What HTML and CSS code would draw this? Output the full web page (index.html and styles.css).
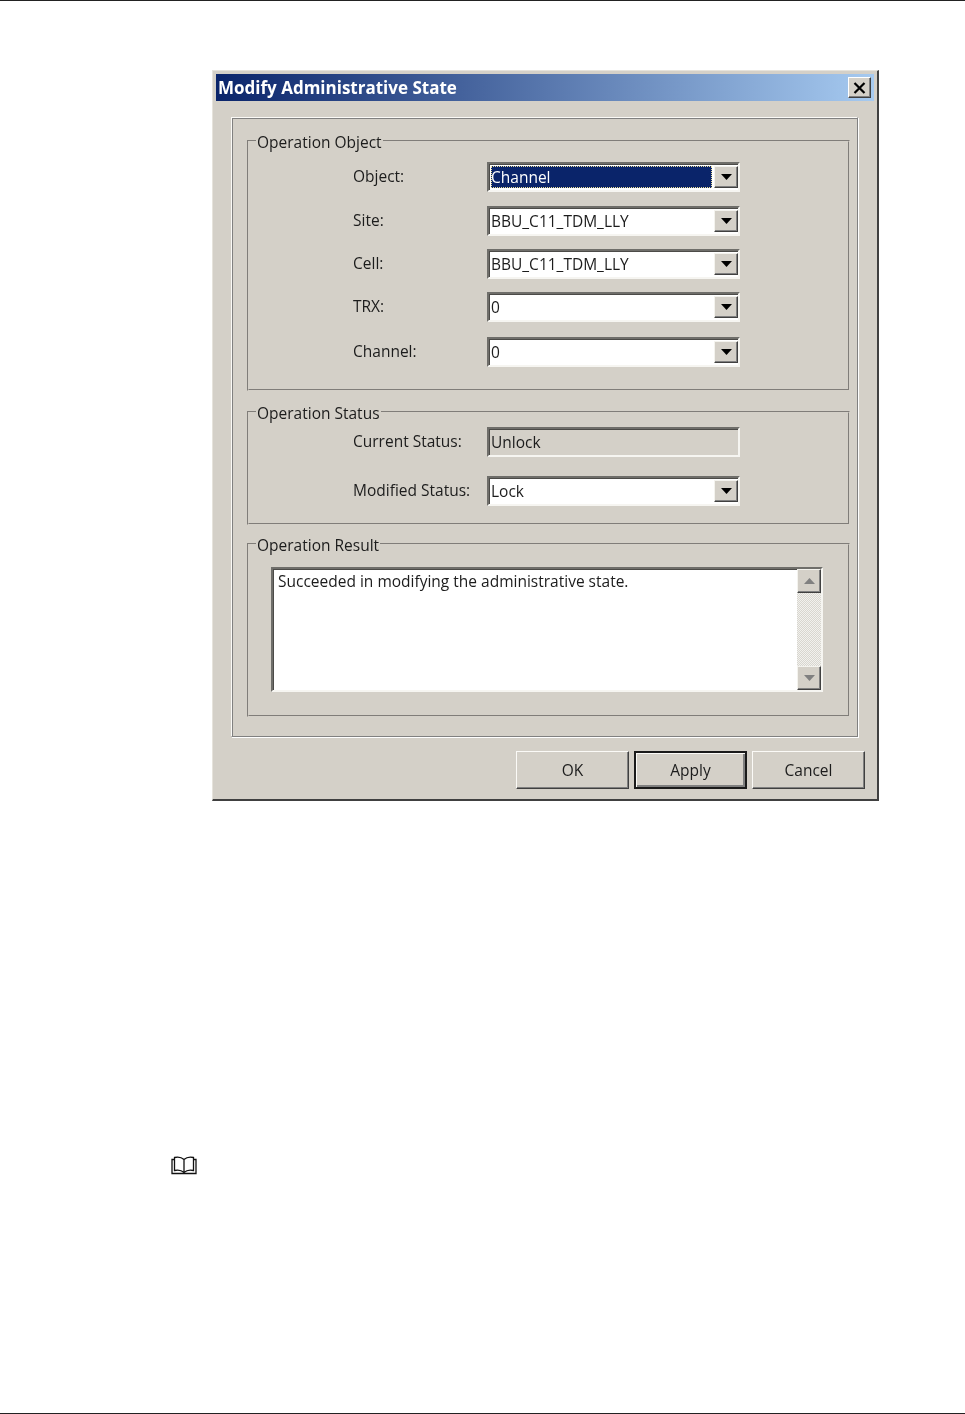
FILE: index.html
```html
<!DOCTYPE html>
<html lang="en">
<head>
  <meta charset="UTF-8" />
  <title>Modify Administrative State</title>
  <link rel="stylesheet" href="styles.css">
</head>
<body>
  <div class="dialog">
    <div class="title-bar">
      <span class="title-text">Modify Administrative State</span>
      <button class="close-button" aria-label="Close">
        <svg width="13" height="12" viewBox="0 0 13 12"><path d="M1.5 1 L11.5 11 M11.5 1 L1.5 11" stroke="#000" stroke-width="2.2" fill="none"/></svg>
      </button>
    </div>
    <div class="panel">
      <fieldset class="group group-object">
        <legend>Operation Object</legend>
        <div class="form-grid rows-object">
          <label>Object:</label>
          <div class="combo">
            <div class="combo-value selected"><span>Channel</span></div>
            <div class="combo-arrow"><svg width="11" height="6" viewBox="0 0 11 6"><path d="M0 0 H11 L5.5 6 Z" fill="#000"/></svg></div>
          </div>
          <label>Site:</label>
          <div class="combo">
            <div class="combo-value">BBU_C11_TDM_LLY</div>
            <div class="combo-arrow"><svg width="11" height="6" viewBox="0 0 11 6"><path d="M0 0 H11 L5.5 6 Z" fill="#000"/></svg></div>
          </div>
          <label>Cell:</label>
          <div class="combo">
            <div class="combo-value">BBU_C11_TDM_LLY</div>
            <div class="combo-arrow"><svg width="11" height="6" viewBox="0 0 11 6"><path d="M0 0 H11 L5.5 6 Z" fill="#000"/></svg></div>
          </div>
          <label>TRX:</label>
          <div class="combo">
            <div class="combo-value">0</div>
            <div class="combo-arrow"><svg width="11" height="6" viewBox="0 0 11 6"><path d="M0 0 H11 L5.5 6 Z" fill="#000"/></svg></div>
          </div>
          <label>Channel:</label>
          <div class="combo">
            <div class="combo-value">0</div>
            <div class="combo-arrow"><svg width="11" height="6" viewBox="0 0 11 6"><path d="M0 0 H11 L5.5 6 Z" fill="#000"/></svg></div>
          </div>
        </div>
      </fieldset>
      <fieldset class="group group-status">
        <legend>Operation Status</legend>
        <div class="form-grid rows-status">
          <label>Current Status:</label>
          <div class="combo readonly"><div class="combo-value">Unlock</div></div>
          <label>Modified Status:</label>
          <div class="combo">
            <div class="combo-value">Lock</div>
            <div class="combo-arrow"><svg width="11" height="6" viewBox="0 0 11 6"><path d="M0 0 H11 L5.5 6 Z" fill="#000"/></svg></div>
          </div>
        </div>
      </fieldset>
      <fieldset class="group group-result">
        <legend>Operation Result</legend>
        <div class="result-box">
          <div class="result-text">Succeeded in modifying the administrative state.</div>
          <div class="scrollbar">
            <div class="scroll-button"><svg width="11" height="6" viewBox="0 0 11 6"><path d="M5.5 0 L11 6 H0 Z" fill="#808080"/></svg></div>
            <div class="scroll-track"></div>
            <div class="scroll-button"><svg width="11" height="6" viewBox="0 0 11 6"><path d="M0 0 H11 L5.5 6 Z" fill="#808080"/></svg></div>
          </div>
        </div>
      </fieldset>
    </div>
    <div class="button-row">
      <button class="dlg-button">OK</button>
      <button class="dlg-button default">Apply</button>
      <button class="dlg-button">Cancel</button>
    </div>
  </div>

  <div class="note-icon">
    <svg width="26" height="19" viewBox="0 0 26 19">
      <path d="M13 3.5 C10.5 1.2 6.5 0.8 3.5 1.5 L3.5 14.5 C6.5 13.8 10.5 14.2 13 16.5 C15.5 14.2 19.5 13.8 22.5 14.5 L22.5 1.5 C19.5 0.8 15.5 1.2 13 3.5 Z M13 3.5 V16.5" fill="none" stroke="#111" stroke-width="1.3"/>
      <path d="M3.5 3.5 H1 V17.5 H25 V3.5 H22.5" fill="none" stroke="#111" stroke-width="1.3"/>
    </svg>
  </div>

  <div class="page-foot"></div>
</body>
</html>
```
FILE: styles.css
```css
:root {
  --face: #d4d0c8;
  --shadow: #808080;
  --dark: #404040;
}
* { box-sizing: border-box; margin: 0; padding: 0; }
html, body { height: 1414px; }
body {
  display: flex;
  flex-direction: column;
  background-color: white;
  border-top: 1px solid #222;
  font-family: 'Open Sans', 'Noto Sans', sans-serif;
  font-size: 15.5px;
  color: #1c1c1c;
}

/* dialog window */
.dialog {
  width: 667px;
  height: 731px;
  margin: 69px 0 0 212px;
  padding: 3px 3px 0 3px;
  background-color: var(--face);
  border: 1px solid #e6e3dc;
  border-right: 2px solid var(--dark);
  border-bottom: 2px solid var(--dark);
  filter: blur(0.4px);
}
.title-bar {
  display: flex;
  align-items: center;
  justify-content: space-between;
  height: 27px;
  padding: 0 3px 0 2px;
  background: linear-gradient(to right, #0a246a, #a6caf0);
  color: white;
  font-size: 17px;
  font-weight: 700;
}
.close-button {
  display: flex;
  align-items: center;
  justify-content: center;
  width: 23px;
  height: 21px;
  background-color: var(--face);
  border: 1px solid;
  border-color: #fff var(--dark) var(--dark) #fff;
  box-shadow: inset -1px -1px 0 var(--shadow);
}

/* etched frame around the three groups */
.panel {
  height: 620px;
  margin: 16px 16px 0 15px;
  padding: 12px 7px 0 15px;
  border: 1px solid;
  border-color: #fbfaf7 var(--shadow) var(--shadow) #fbfaf7;
  box-shadow: inset 1px 1px 0 var(--shadow), 1px 1px 0 #fff;
}
.group {
  border: 2px groove var(--face);
  min-width: 0;
}
.group legend {
  margin-left: 7px;
  padding: 2px 1px 0;
  line-height: 20px;
}
.group-object { height: 261px; padding-top: 10px; }
.group-status { height: 124px; margin-top: 10px; padding-top: 4px; }
.group-result { height: 184px; margin-top: 8px; padding-top: 12px; }

.form-grid {
  display: grid;
  grid-template-columns: 134px 253px;
  padding-left: 104px;
  align-items: start;
}
.rows-object { grid-template-rows: 44px 43px 43px 45px 30px; }
.rows-status { grid-template-rows: 49px 30px; }
.form-grid label { line-height: 28px; }

/* combo box */
.combo {
  display: flex;
  height: 30px;
  padding: 2px 0 2px 2px;
  background-color: white;
  border: 2px solid;
  border-color: #6f6e6a #f6f5f1 #f6f5f1 #6f6e6a;
  box-shadow: inset 1px 1px 0 #4c4b48;
}
.combo-value {
  flex: 1;
  min-width: 0;
  line-height: 22px;
}
.combo-value.selected {
  background-color: #0a246a;
  color: white;
  outline: 1px dotted #e9dc98;
  outline-offset: -1px;
  margin-right: 2px;
}
.combo-arrow {
  display: flex;
  align-items: center;
  justify-content: center;
  width: 24px;
  background-color: var(--face);
  border: 1px solid;
  border-color: #f4f3ee var(--dark) var(--dark) #f4f3ee;
  box-shadow: inset -1px -1px 0 var(--shadow);
}
.combo.readonly { background-color: var(--face); }

/* result text area */
.result-box {
  display: flex;
  height: 125px;
  margin: 0 25px 0 22px;
  background-color: white;
  border: 2px solid;
  border-color: #6f6e6a #f6f5f1 #f6f5f1 #6f6e6a;
  box-shadow: inset 1px 1px 0 #4c4b48;
}
.result-text {
  flex: 1;
  padding: 0 5px;
  line-height: 24px;
}
.scrollbar {
  display: flex;
  flex-direction: column;
  width: 24px;
}
.scroll-button {
  display: flex;
  align-items: center;
  justify-content: center;
  height: 24px;
  background-color: var(--face);
  border: 1px solid;
  border-color: #f4f3ee var(--dark) var(--dark) #f4f3ee;
  box-shadow: inset -1px -1px 0 var(--shadow);
}
.scroll-track {
  flex: 1;
  background-image: repeating-conic-gradient(#d8d6cf 0 25%, #f2f1ee 0 50%);
  background-size: 2px 2px;
}

/* bottom buttons */
.button-row {
  display: flex;
  justify-content: flex-end;
  gap: 5px;
  margin: 14px 9px 0 0;
}
.dlg-button {
  width: 113px;
  height: 38px;
  background-color: var(--face);
  border: 1px solid;
  border-color: #fbfaf7 var(--dark) var(--dark) #fbfaf7;
  box-shadow: inset -1px -1px 0 var(--shadow);
  font-family: inherit;
  font-size: 15.5px;
  color: #1c1c1c;
}
.dlg-button.default {
  border: 2px solid #1a1a1a;
  box-shadow: inset 1px 1px 0 #fbfaf7, inset -2px -2px 0 var(--shadow);
}

.note-icon {
  margin: 355px 0 0 171px;
  height: 19px;
  line-height: 0;
}
.page-foot {
  margin-top: auto;
  border-top: 1px solid #222;
}
```
